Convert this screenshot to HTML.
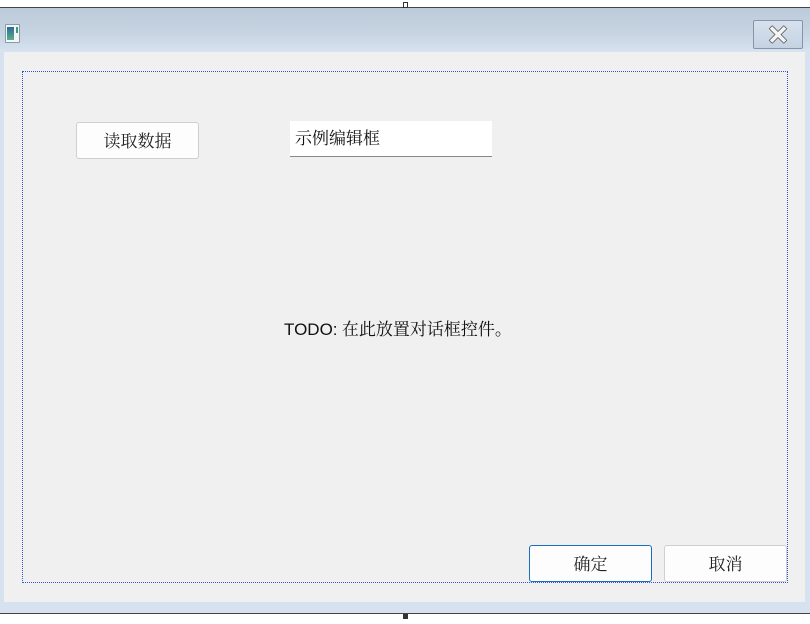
<!DOCTYPE html>
<html><head><style>
body{margin:0;width:810px;height:624px;background:#fff;position:relative;overflow:hidden;font-family:"Noto Serif CJK SC","Liberation Serif",serif;}
div{position:absolute;box-sizing:border-box}
.btn{background:#fdfdfd;border:1px solid #cfcfcf;border-radius:3px;font-size:17px;color:#222;text-align:center;line-height:34px}
</style></head><body>
<div style="left:0;top:7px;width:810px;height:1px;background:#444"></div>
<div style="left:403px;top:2px;width:5px;height:6px;border:1px solid #333;background:#fff"></div>
<div style="left:0;top:8px;width:810px;height:605px;background:#d6e2ef"></div>
<div style="left:0;top:8px;width:810px;height:44px;background:linear-gradient(#bccbda,#c7d4e2 60%,#d7e3f0)"></div>
<div style="left:5px;top:24px;width:15px;height:19px;border:1px solid #8a9aaa;background:#f5f5f5;border-radius:1px"></div>
<div style="left:7px;top:27px;width:7px;height:13px;background:linear-gradient(#2a6a9a,#5ab08a)"></div>
<div style="left:16px;top:27px;width:2px;height:6px;background:#3a9a7a"></div>
<div style="left:753px;top:20px;width:50px;height:29px;border:1px solid #8594aa;border-radius:2px;background:linear-gradient(#d8e2ee,#c4d2e2);color:#f4f4f4;font:bold 26px 'Liberation Sans',sans-serif;text-align:center;line-height:28px;text-shadow:1px 0 #555,-1px 0 #555,0 1px #555,0 -1px #555">✕</div>
<div style="left:4px;top:52px;width:801px;height:550px;background:#f0f0f0"></div>
<div style="left:22px;top:71px;width:766px;height:512px;border:1px dotted #3355cc"></div>
<div class="btn" style="left:76px;top:122px;width:123px;height:37px">读取数据</div>
<div style="left:290px;top:121px;width:202px;height:36px;background:#fff;border-bottom:1px solid #888;font-size:17px;padding:3px 0 0 5px;color:#111">示例编辑框</div>
<div style="left:284px;top:315px;font-size:17px;color:#111;white-space:nowrap"><span style="font-family:'Liberation Sans',sans-serif">TODO:</span> 在此放置对话框控件。</div>
<div class="btn" style="left:529px;top:545px;width:123px;height:37px;border-color:#1a6fc0">确定</div>
<div class="btn" style="left:664px;top:545px;width:123px;height:37px">取消</div>
<div style="left:0;top:613px;width:810px;height:1px;background:#444"></div>
<div style="left:403px;top:614px;width:5px;height:5px;background:#333"></div>
</body></html>
